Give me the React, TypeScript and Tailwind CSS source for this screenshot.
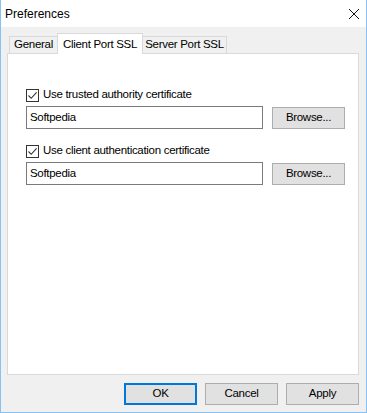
import React from "react";

const font = { fontFamily: '"Liberation Sans", Arial, sans-serif' };
const txt = "text-[11.5px] tracking-[-0.3px] text-black";

function CheckBox({ label }: { label: string }) {
  return (
    <label className="flex items-center gap-[4px] h-[14px]">
      <span className="w-[13px] h-[13px] border border-[#333333] bg-white flex items-center justify-center">
        <svg width="11" height="11" viewBox="0 0 11 11">
          <path d="M1.5 5.5 L4.2 8.3 L9.6 2.4" fill="none" stroke="#333" strokeWidth="1.1" />
        </svg>
      </span>
      <span className={txt + " leading-none"}>{label}</span>
    </label>
  );
}

function WinButton({ children, primary }: { children: React.ReactNode; primary?: boolean }) {
  return (
    <button
      className={
        "w-[73px] h-[22px] bg-[#e1e1e1] flex items-center justify-center " +
        txt +
        " " +
        (primary ? "border-2 border-[#0078d7]" : "border border-[#adadad]")
      }
    >
      {children}
    </button>
  );
}

function CertRow({ label }: { label: string }) {
  return (
    <div className="flex flex-col">
      <CheckBox label={label} />
      <div className="flex items-center mt-[4px]">
        <div className={"w-[237px] h-[23px] border border-[#7a7a7a] bg-white flex items-center pl-[3px] " + txt}>
          Softpedia
        </div>
        <div className="ml-[9px]">
          <WinButton>Browse...</WinButton>
        </div>
      </div>
    </div>
  );
}

export default function App() {
  return (
    <div
      className="w-[367px] h-[413px] border border-t-0 border-[#88c2f2] flex flex-col bg-[#f0f0f0] overflow-hidden"
      style={font}
    >
      {/* title bar */}
      <div className="h-[27px] bg-white flex items-center justify-between pl-[4px] pr-[5px] shrink-0">
        <span className="text-[12px] text-black">Preferences</span>
        <svg width="12" height="12" viewBox="0 0 12 12" className="mr-[1px]">
          <path d="M1 1 L11 11 M11 1 L1 11" stroke="#111" strokeWidth="1" />
        </svg>
      </div>

      {/* tabs */}
      <div className="flex items-end h-[26px] pl-[8px] shrink-0">
        <div className={"w-[49px] h-[17px] border border-b-0 border-[#d9d9d9] bg-[#f0f0f0] flex items-center justify-center " + txt}>
          General
        </div>
        <div className={"w-[86px] -ml-px h-[21px] border border-b-0 border-[#d9d9d9] bg-white flex items-start justify-center pt-[2px] -mb-px relative z-10 " + txt}>
          Client Port SSL
        </div>
        <div className={"w-[84px] h-[17px] border border-b-0 border-l-0 border-[#d9d9d9] bg-[#f0f0f0] flex items-center justify-center " + txt}>
          Server Port SSL
        </div>
      </div>

      {/* panel */}
      <div className="ml-[6px] w-[352px] h-[322px] bg-white border border-[#d9d9d9] shrink-0 pt-[34px] pl-[18px] flex flex-col gap-[15px]">
        <CertRow label="Use trusted authority certificate" />
        <CertRow label="Use client authentication certificate" />
      </div>

      {/* buttons */}
      <div className="flex justify-end gap-[8px] pr-[7px] mt-[8px]">
        <WinButton primary>OK</WinButton>
        <WinButton>Cancel</WinButton>
        <WinButton>Apply</WinButton>
      </div>
    </div>
  );
}
